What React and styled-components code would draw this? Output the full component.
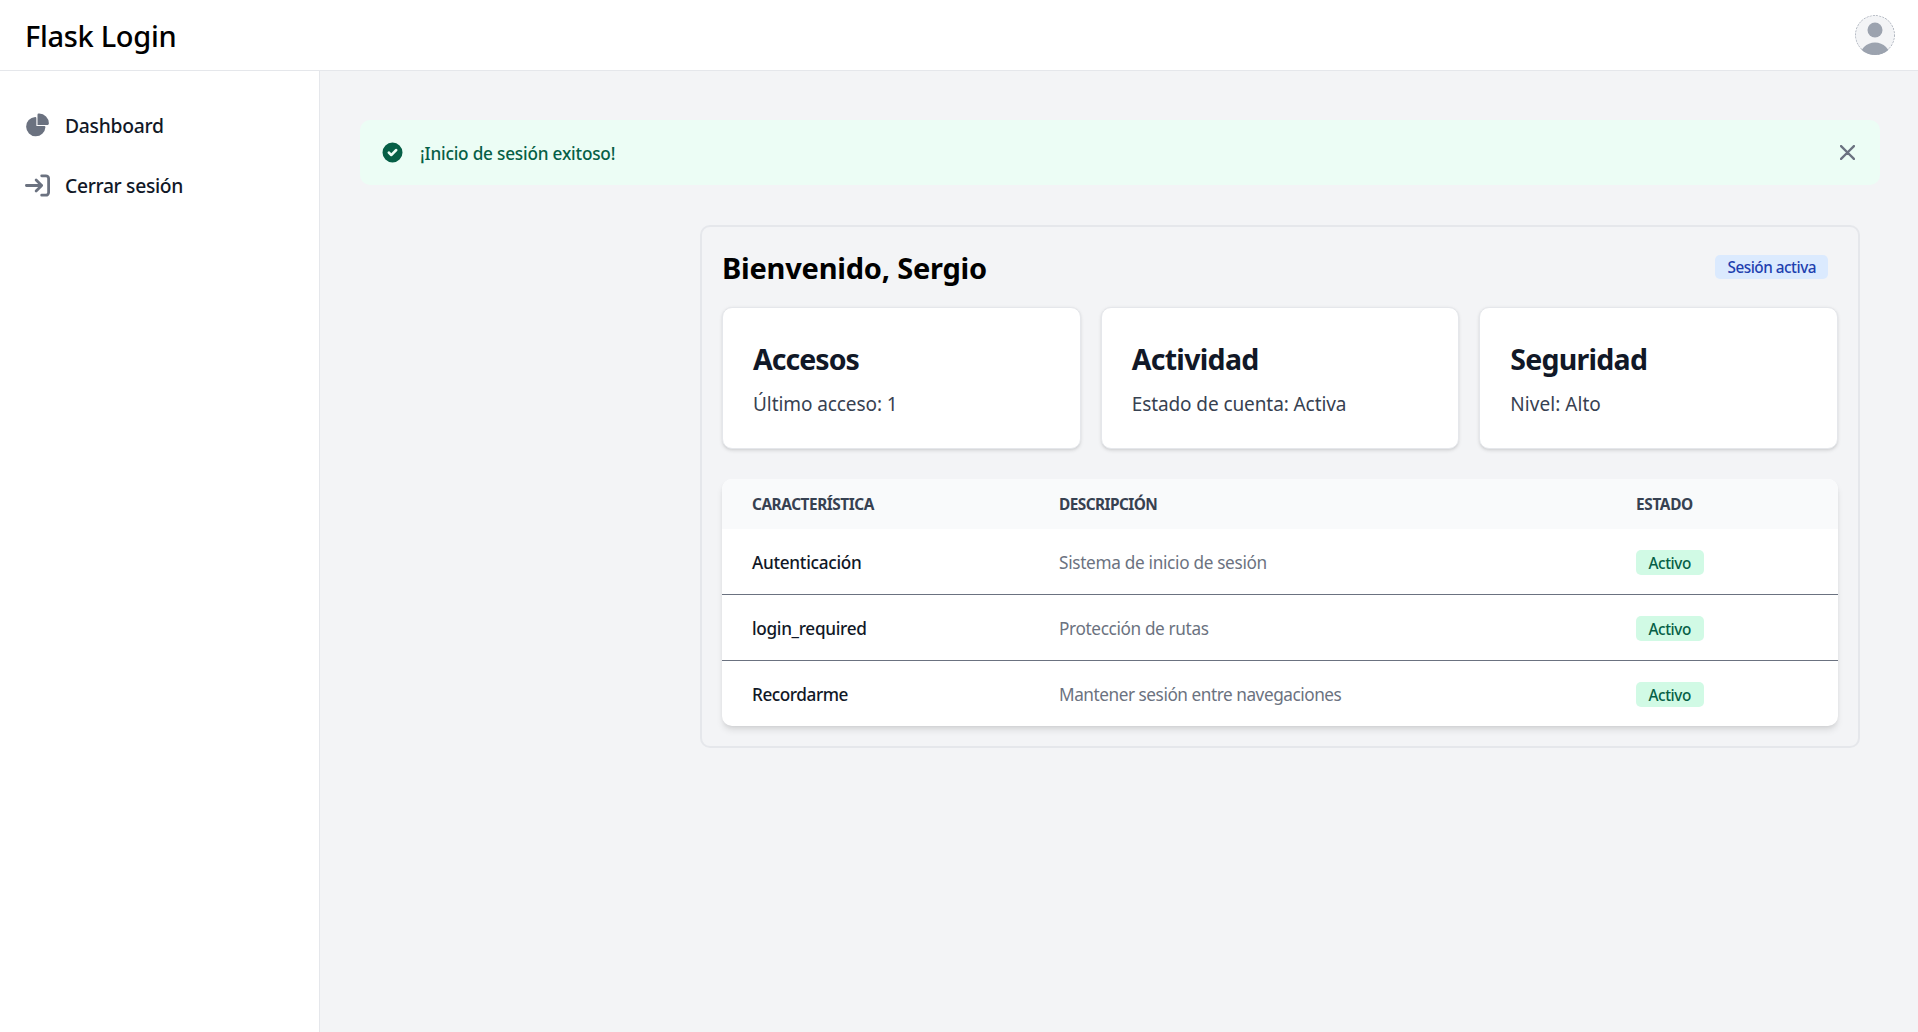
import React from "react";
import styled, { createGlobalStyle } from "styled-components";

const GlobalStyle = createGlobalStyle`
  *, *::before, *::after { box-sizing: border-box; }
  body {
    margin: 0;
    background: #f3f4f6;
    font-family: "Noto Sans", "Open Sans", sans-serif;
    color: #000;
    overflow: hidden;
  }
  h1, h2, p { margin: 0; }
`;

const Page = styled.div`
  display: flex;
  flex-direction: column;
  height: 100vh;
`;

const Header = styled.header`
  display: flex;
  align-items: center;
  justify-content: space-between;
  height: 71px;
  flex: none;
  padding: 15px 23px 15px 25px;
  background: #fff;
  border-bottom: 1px solid #e5e7eb;
`;

const Brand = styled.h1`
  padding-top: 1px;
  font-size: 29px;
  font-weight: 500;
  line-height: 39px;
  letter-spacing: -0.32px;
  white-space: nowrap;
`;

const Avatar = styled.svg`
  display: block;
  width: 40px;
  height: 40px;
  border-radius: 50%;
`;

const Body = styled.div`
  display: flex;
  flex: 1;
  min-height: 0;
`;

const Sidebar = styled.aside`
  width: 320px;
  flex: none;
  padding: 29px 15px 20px;
  background: #fff;
  border-right: 1px solid #e5e7eb;
`;

const Menu = styled.nav`
  display: flex;
  flex-direction: column;
  gap: 10px;
`;

const MenuItem = styled.a`
  display: flex;
  align-items: center;
  gap: 15px;
  height: 50px;
  padding: 10px;
  border-radius: 10px;
  color: #111827;
  text-decoration: none;
`;

const MenuIcon = styled.svg`
  display: block;
  width: 25px;
  height: 25px;
  flex: none;
  color: #6b7280;
`;

const MenuLabel = styled.span`
  padding-top: 1px;
  font-size: 19.3px;
  font-weight: 500;
  line-height: 29px;
  letter-spacing: ${(p) => p.$track}px;
  white-space: nowrap;
`;

const Main = styled.main`
  display: flex;
  flex-direction: column;
  gap: 40px;
  flex: 1;
  min-width: 0;
  padding: 49px 38px 40px 40px;
`;

const Alert = styled.div`
  display: flex;
  align-items: center;
  gap: 15px;
  height: 65px;
  padding: 20px;
  border-radius: 10px;
  background: #ecfdf5;
  color: #065f46;
`;

const AlertIcon = styled.svg`
  display: block;
  width: 25px;
  height: 25px;
  flex: none;
`;

const AlertText = styled.p`
  flex: 1;
  padding-top: 2px;
  font-size: 17.2px;
  font-weight: 500;
  line-height: 23px;
  letter-spacing: -0.2px;
`;

const CloseButton = styled.button`
  display: flex;
  align-items: center;
  justify-content: center;
  width: 40px;
  height: 40px;
  margin: -8px -7.5px;
  padding: 0;
  border: 0;
  border-radius: 10px;
  background: transparent;
  color: #6b7280;
  cursor: pointer;

  svg {
    display: block;
    width: 15px;
    height: 15px;
  }
`;

const Panel = styled.section`
  width: 1160px;
  margin-right: 20px;
  align-self: flex-end;
  padding: 20px;
  border: 2px solid #e5e7eb;
  border-radius: 10px;
`;

const PanelHead = styled.div`
  display: flex;
  align-items: center;
  justify-content: space-between;
  height: 40px;
  margin-bottom: 20px;
`;

const Welcome = styled.h2`
  padding-top: 1px;
  font-size: 29px;
  font-weight: 700;
  line-height: 39px;
  letter-spacing: -0.22px;
`;

const Badge = styled.span`
  display: block;
  padding: ${(p) => (p.$tone === "blue" ? "2px 12.5px" : "3px 12.5px 2px")};
  border-radius: 5px;
  font-size: 15.3px;
  font-weight: 500;
  line-height: 20px;
  white-space: nowrap;
  background: ${(p) => (p.$tone === "blue" ? "#dbeafe" : "#d1fae5")};
  color: ${(p) => (p.$tone === "blue" ? "#1e40af" : "#065f46")};
  letter-spacing: ${(p) => (p.$tone === "blue" ? "-0.48px" : "-0.44px")};
`;

const SessionBadge = styled(Badge)`
  width: 113px;
  margin-right: 10px;
`;

const Cards = styled.div`
  display: grid;
  grid-template-columns: repeat(3, 1fr);
  gap: 20px;
  margin-bottom: 30px;
`;

const Card = styled.article`
  padding: 30px;
  border: 1px solid #e5e7eb;
  border-radius: 10px;
  background: #fff;
  box-shadow: 0 1.25px 3.75px 0 rgba(0, 0, 0, 0.1), 0 1.25px 2.5px -1.25px rgba(0, 0, 0, 0.1);
`;

const CardTitle = styled.h2`
  margin-bottom: 10px;
  padding-top: 2px;
  font-size: 28.5px;
  font-weight: 700;
  line-height: 38px;
  letter-spacing: ${(p) => p.$track}px;
  color: #111827;
`;

const CardText = styled.p`
  padding-top: 2px;
  font-size: 19px;
  line-height: 28px;
  letter-spacing: ${(p) => p.$track}px;
  color: #374151;
`;

const Table = styled.div`
  overflow: hidden;
  border-radius: 10px;
  background: #fff;
  box-shadow: 0 5px 7.5px -1.25px rgba(0, 0, 0, 0.1), 0 2.5px 5px -2.5px rgba(0, 0, 0, 0.1);
`;

const Row = styled.div`
  display: grid;
  grid-template-columns: 307px 577px 1fr;
`;

const HeadRow = styled(Row)`
  background: #f9fafb;
`;

const BodyRow = styled(Row)`
  & + & { border-top: 1px solid #6b7280; }
`;

const HeadCell = styled.div`
  padding: 16px 30px 14px;
  font-size: 15.4px;
  font-weight: 700;
  line-height: 20px;
  letter-spacing: ${(p) => p.$track}px;
  text-transform: uppercase;
  color: #374151;
`;

const Cell = styled.div`
  padding: 22px 30px 20px;
  font-size: 17.2px;
  line-height: 23px;
  letter-spacing: ${(p) => p.$track}px;
  white-space: nowrap;
  color: #6b7280;
`;

const NameCell = styled(Cell)`
  font-weight: 500;
  color: #111827;
`;

const StatusCell = styled.div`
  display: flex;
  align-items: flex-start;
  padding: 21px 30px 19px;
`;

const StatusBadge = styled(Badge)`
  width: 68px;
`;

const cards = [
  { title: "Accesos", titleTrack: -0.95, text: "Último acceso: 1", track: -0.08 },
  { title: "Actividad", titleTrack: -0.7, text: "Estado de cuenta: Activa", track: -0.09 },
  { title: "Seguridad", titleTrack: -0.75, text: "Nivel: Alto", track: 0.05 },
];

const features = [
  { name: "Autenticación", nameTrack: -0.28, text: "Sistema de inicio de sesión", track: -0.31 },
  { name: "login_required", nameTrack: -0.32, text: "Protección de rutas", track: -0.36 },
  { name: "Recordarme", nameTrack: -0.45, text: "Mantener sesión entre navegaciones", track: -0.45 },
];

export default function App() {
  return (
    <Page>
      <GlobalStyle />
      <Header>
        <Brand>Flask Login</Brand>
        <Avatar viewBox="0 0 40 40" aria-hidden="true">
          <circle cx="20" cy="20" r="20" fill="#f3f4f6" />
          <circle cx="20" cy="15" r="7.5" fill="#9ca3af" />
          <circle cx="20" cy="43" r="15.6" fill="#9ca3af" />
          <circle cx="20" cy="20" r="19.6" fill="none" stroke="#9ca3af" strokeWidth="0.9" strokeDasharray="2 1.2" />
        </Avatar>
      </Header>
      <Body>
        <Sidebar>
          <Menu>
            <MenuItem href="#">
              <MenuIcon viewBox="0 0 22 21" fill="currentColor">
                <path d="M16.975 11H10V4.025a1 1 0 0 0-1.066-.998 8.5 8.5 0 1 0 9.039 9.039.999.999 0 0 0-1-1.066h.002Z" />
                <path d="M12.5 0c-.157 0-.311.01-.565.027A1 1 0 0 0 11 1.02V10h8.975a1 1 0 0 0 1-.935c.013-.188.028-.374.028-.565A8.51 8.51 0 0 0 12.5 0Z" />
              </MenuIcon>
              <MenuLabel $track={-0.28}>Dashboard</MenuLabel>
            </MenuItem>
            <MenuItem href="#">
              <MenuIcon viewBox="0 0 18 16" fill="none" stroke="currentColor" strokeWidth="2" strokeLinecap="round" strokeLinejoin="round">
                <path d="M1 8h11m0 0L8 4m4 4-4 4m4-11h3a2 2 0 0 1 2 2v10a2 2 0 0 1-2 2h-3" />
              </MenuIcon>
              <MenuLabel $track={-0.33}>Cerrar sesión</MenuLabel>
            </MenuItem>
          </Menu>
        </Sidebar>
        <Main>
          <Alert role="alert">
            <AlertIcon viewBox="0 0 20 20" fill="currentColor">
              <path
                fillRule="evenodd"
                clipRule="evenodd"
                d="M10 18a8 8 0 1 0 0-16 8 8 0 0 0 0 16Zm3.707-9.293a1 1 0 0 0-1.414-1.414L9 10.586 7.707 9.293a1 1 0 0 0-1.414 1.414l2 2a1 1 0 0 0 1.414 0l4-4Z"
              />
            </AlertIcon>
            <AlertText>¡Inicio de sesión exitoso!</AlertText>
            <CloseButton type="button">
              <svg viewBox="0 0 14 14" fill="none" stroke="currentColor" strokeWidth="2.2" strokeLinecap="round" strokeLinejoin="round">
                <path d="m1 1 6 6m0 0 6 6M7 7l6-6M7 7l-6 6" />
              </svg>
            </CloseButton>
          </Alert>
          <Panel>
            <PanelHead>
              <Welcome>Bienvenido, Sergio</Welcome>
              <SessionBadge $tone="blue">Sesión activa</SessionBadge>
            </PanelHead>
            <Cards>
              {cards.map((c) => (
                <Card key={c.title}>
                  <CardTitle $track={c.titleTrack}>{c.title}</CardTitle>
                  <CardText $track={c.track}>{c.text}</CardText>
                </Card>
              ))}
            </Cards>
            <Table>
              <HeadRow>
                <HeadCell $track={-0.46}>Característica</HeadCell>
                <HeadCell $track={-0.56}>Descripción</HeadCell>
                <HeadCell $track={-0.35}>Estado</HeadCell>
              </HeadRow>
              {features.map((f) => (
                <BodyRow key={f.name}>
                  <NameCell $track={f.nameTrack}>{f.name}</NameCell>
                  <Cell $track={f.track}>{f.text}</Cell>
                  <StatusCell>
                    <StatusBadge $tone="green">Activo</StatusBadge>
                  </StatusCell>
                </BodyRow>
              ))}
            </Table>
          </Panel>
        </Main>
      </Body>
    </Page>
  );
}
